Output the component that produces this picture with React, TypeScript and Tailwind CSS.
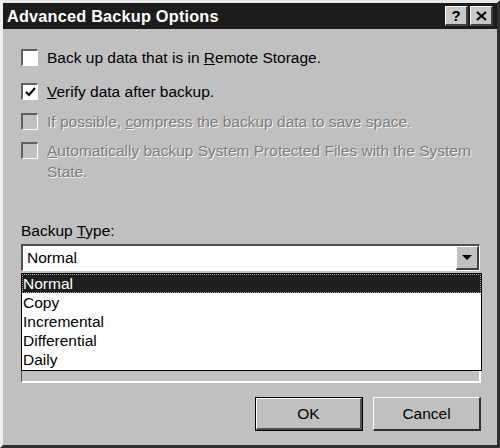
import { ReactNode } from "react";

const font = { fontFamily: '"Liberation Sans", Arial, sans-serif' };

function Box({ checked, disabled }: { checked?: boolean; disabled?: boolean }) {
  return (
    <div className="w-[17px] h-[17px] shrink-0 border-t-2 border-l-2 border-t-[#606060] border-l-[#606060] border-b border-r border-b-white border-r-white">
      <div
        className={`w-full h-full flex items-center justify-center ${
          disabled ? "bg-[#c0c0c0]" : "bg-white"
        }`}
      >
        {checked && (
          <svg width="11" height="10" viewBox="0 0 11 10">
            <path d="M1 5 L4 8 L10 1" stroke="#000" strokeWidth="2.2" fill="none" />
          </svg>
        )}
      </div>
    </div>
  );
}

function Option({
  children,
  checked,
  disabled,
  className = "",
}: {
  children: ReactNode;
  checked?: boolean;
  disabled?: boolean;
  className?: string;
}) {
  return (
    <div className={`flex items-start gap-[9px] ${className}`}>
      <Box checked={checked} disabled={disabled} />
      <span
        className={`text-[15.5px] leading-[21px] -mt-[2px] ${
          disabled ? "text-[#7e7e7e] [text-shadow:1px_1px_0_#f4f4f4]" : "text-black"
        }`}
      >
        {children}
      </span>
    </div>
  );
}

export default function App() {
  const items = ["Normal", "Copy", "Incremental", "Differential", "Daily"];
  return (
    <div style={font} className="w-[500px] h-[448px] bg-[#c0c0c0] overflow-hidden">
      <div className="w-full h-full border-t-[3px] border-l-[3px] border-t-[#e8e8e8] border-l-[#f0f0f0] border-r-[3px] border-b-[3px] border-r-[#303030] border-b-[#303030] flex flex-col">
        {/* Title bar */}
        <div className="h-[26px] bg-[#1c1c1c] flex items-center justify-between pl-[4px] pr-[4px]">
          <span className="text-white font-bold text-[16.3px] tracking-[0.2px]">Advanced Backup Options</span>
          <div className="flex gap-[2px]">
            <div className="w-[23px] h-[20px] bg-[#c8c8c8] border-t border-l border-white border-b-2 border-r-2 border-b-[#404040] border-r-[#404040] flex items-center justify-center font-bold text-[15px] leading-none">
              ?
            </div>
            <div className="w-[23px] h-[20px] bg-[#c8c8c8] border-t border-l border-white border-b-2 border-r-2 border-b-[#404040] border-r-[#404040] flex items-center justify-center">
              <svg width="11" height="10" viewBox="0 0 11 10">
                <path d="M1 1 L10 9 M10 1 L1 9" stroke="#000" strokeWidth="2" />
              </svg>
            </div>
          </div>
        </div>

        {/* Body */}
        <div className="flex-1 pl-[18px] pr-[16px] pt-[20px] flex flex-col">
          <Option>
            Back up data that is in <u>R</u>emote Storage.
          </Option>
          <Option checked className="mt-[15px]">
            <u>V</u>erify data after backup.
          </Option>
          <Option disabled className="mt-[11px]">
            If possible, <u>c</u>ompress the backup data to save space.
          </Option>
          <Option disabled className="mt-[10px]">
            <u>A</u>utomatically backup System Protected Files with the System
            <br />
            State.
          </Option>

          <div className="mt-[40px] text-[15.5px] leading-[18px]">
            Backup <u>T</u>ype:
          </div>

          {/* Combo */}
          <div className="mt-[4px] w-[459px] h-[27px] border-t-2 border-l-2 border-t-[#505050] border-l-[#505050] border-b border-r border-b-white border-r-white bg-white flex items-center justify-between">
            <span className="pl-[4px] text-[15.5px]">Normal</span>
            <div className="w-[23px] h-[24px] bg-[#c0c0c0] border-t border-l border-white border-b-2 border-r-2 border-b-[#404040] border-r-[#404040] flex items-center justify-center">
              <svg width="10" height="6" viewBox="0 0 10 6">
                <path d="M0 0 L10 0 L5 5 Z" fill="#000" />
              </svg>
            </div>
          </div>

          {/* Frame under the dropdown list */}
          <div className="relative mt-[2px] w-[460px] h-[110px] border-t border-l border-[#505050] border-b-2 border-r-2 border-b-white border-r-white">
            <div className="absolute left-[-1px] top-[-1px] w-[461px] h-[98px] bg-white border border-black">
              {items.map((it, i) => (
                <div
                  key={it}
                  className={`h-[19px] pl-[1px] text-[15.5px] leading-[19px] ${
                    i === 0 ? "bg-[#1e1e1e] text-white outline-1 outline-dotted outline-[#aaaaaa] -outline-offset-1" : "text-black"
                  }`}
                >
                  {it}
                </div>
              ))}
            </div>
          </div>

          {/* Buttons */}
          <div className="mt-[14px] flex justify-end gap-[10px]">
            <div className="w-[108px] h-[34px] border border-black">
              <div className="w-full h-full border-t border-l border-white border-b-2 border-r-2 border-b-[#505050] border-r-[#505050] flex items-center justify-center text-[15.5px]">
                OK
              </div>
            </div>
            <div className="w-[108px] h-[34px] border-t border-l border-white border-b-2 border-r-2 border-b-[#303030] border-r-[#303030] flex items-center justify-center text-[15.5px]">
              Cancel
            </div>
          </div>
        </div>
      </div>
    </div>
  );
}
